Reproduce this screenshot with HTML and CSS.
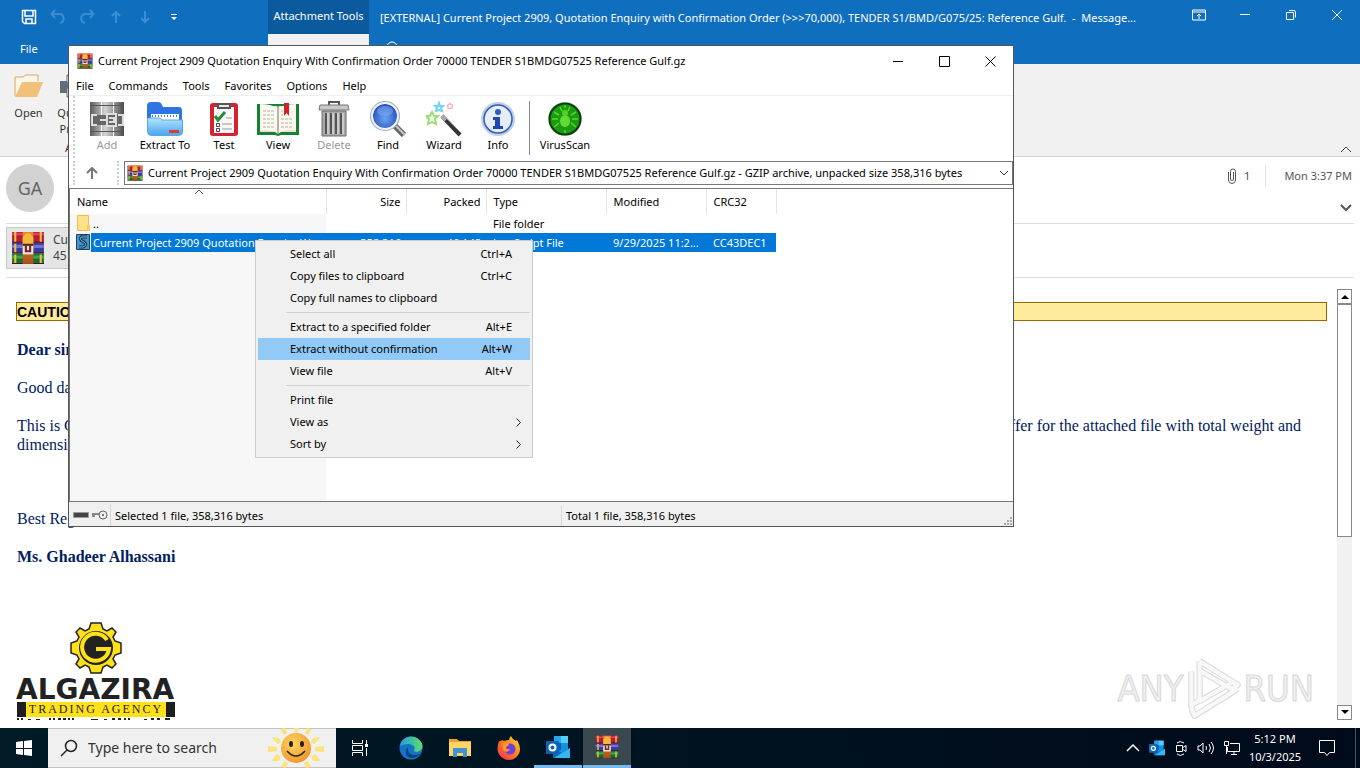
FILE: index.html
```html
<!DOCTYPE html>
<html lang="en">
<head>
<meta charset="utf-8">
<title>Desktop</title>
<link rel="stylesheet" href="styles.css">
</head>
<body>
<svg class="defs" aria-hidden="true">
  <defs>
    <linearGradient id="gold" x1="0" y1="0" x2="0" y2="1"><stop offset="0" stop-color="#e8902a"/><stop offset="1" stop-color="#a8501a"/></linearGradient>
    <linearGradient id="steel" x1="0" x2="1"><stop offset="0" stop-color="#5c5c5c"/><stop offset=".45" stop-color="#d4d4d4"/><stop offset="1" stop-color="#4c4c4c"/></linearGradient>
    <linearGradient id="folderFront" x1="0" y1="0" x2="0" y2="1"><stop offset="0" stop-color="#b5e4ff"/><stop offset="1" stop-color="#4aa6ef"/></linearGradient>
    <radialGradient id="lens" cx=".5" cy=".6" r=".6"><stop offset="0" stop-color="#6ea2f2"/><stop offset="1" stop-color="#1746b4"/></radialGradient>
    <linearGradient id="edgeA" x1="0" y1="0" x2="1" y2="0"><stop offset="0" stop-color="#1f9fe0"/><stop offset="1" stop-color="#5fdc6a"/></linearGradient>
    <radialGradient id="sunFace" cx=".4" cy=".35" r=".7"><stop offset="0" stop-color="#ffd560"/><stop offset="1" stop-color="#f0932a"/></radialGradient>
    <linearGradient id="fox" x1="1" y1="0" x2="0" y2="1"><stop offset="0" stop-color="#ffe030"/><stop offset=".5" stop-color="#ff7a20"/><stop offset="1" stop-color="#f0285c"/></linearGradient>
  </defs>
  <symbol id="winrar" viewBox="0 0 32 32">
    <path fill="#b81c34" d="M1 1h30v10H1z"/><path fill="#e0455a" d="M1 2h30v2H1z"/>
    <path fill="#3c3c9c" d="M1 11h30v10H1z"/><path fill="#7272dc" d="M1 13h30v3H1z"/>
    <path fill="#16702c" d="M1 21h30v10H1z"/><path fill="#3aa452" d="M1 23h30v3H1z"/>
    <path fill="#48102c" d="M1 10h30v1H1zM1 20h30v1H1zM1 30h30v1H1z"/>
    <path fill="#f0bc3c" d="M3 1h2v9H3zM3 12h2v8H3zM3 22h2v8H3zM27 1h2v9h-2zM27 22h2v8h-2z"/>
    <path fill="url(#gold)" d="M11 1h10v30H11z"/>
    <path fill="#f4b840" d="M11 6q5-8 10 0v8H11z"/><path fill="#4a2a12" d="M11 12h10v3H11z"/>
    <path fill="#e8e4e4" d="M11 14h10v8H11z"/><path fill="#802020" d="M13 14h2v4h2v-4h2v6h-6z"/>
  </symbol>
  <symbol id="outlook" viewBox="0 0 24 24">
    <path fill="#1490df" d="M8 1h14v20H8z"/><path fill="#28a8ea" d="M8 1h7v7H8z"/><path fill="#50d0f8" d="M15 1h7v7h-7z"/>
    <path fill="#0f5ca8" d="M8 8h7v7H8z"/><path fill="#1066b5" d="m7 13 9 5 8-5v10H7z"/><path fill="#35b8f1" d="m8 23 16-10v10z"/>
    <rect x="0" y="6" width="13" height="13" rx="1" fill="#0a64b8"/><circle cx="6.500" cy="12.500" r="3" fill="none" stroke="#fff" stroke-width="2"/>
  </symbol>
</svg>

<div class="desktop">
  <section class="outlook" aria-label="Message">
    <header class="o-top">
      <div class="o-left">
        <div class="quick">
          <button aria-label="Save"><svg width="16" height="16" viewBox="0 0 16 16"><path d="M1.500 1.500h13v13h-11l-2-2zM4 2v5h8V2M5 14v-4h6v4" fill="none" stroke="#fff" stroke-width="1.500"/></svg></button>
          <button aria-label="Undo" class="dim"><svg width="16" height="16" viewBox="0 0 16 16"><path d="M5 1 1.500 5 5 9M2 5h7c6 0 6 8 1 9" /></svg></button>
          <button aria-label="Redo" class="dim"><svg width="16" height="16" viewBox="0 0 16 16"><path d="m11 1 3.500 4L11 9M14 5H7C1 5 1 13 6 14"/></svg></button>
          <button aria-label="Previous" class="dim"><svg width="16" height="16" viewBox="0 0 16 16"><path d="M8 14V3M4 7l4-4 4 4"/></svg></button>
          <button aria-label="Next" class="dim"><svg width="16" height="16" viewBox="0 0 16 16"><path d="M8 2v11M4 9l4 4 4-4"/></svg></button>
          <button aria-label="Customize"><svg width="8" height="8" viewBox="0 0 8 8"><path fill="#fff" d="M1 1h6v1H1zM1 4h6L4 7z"/></svg></button>
        </div>
        <nav class="tabs"><a href="#">File</a><a href="#">Message</a><a href="#">Developer</a><a href="#">Help</a></nav>
      </div>
      <div class="tool-tab"><span>Attachment Tools</span><a href="#">Attachments</a></div>
      <div class="o-right">
        <div class="o-title">
          <h1>[EXTERNAL] Current Project 2909, Quotation Enquiry with Confirmation Order (&gt;&gt;&gt;70,000), TENDER S1/BMD/G075/25: Reference Gulf.&nbsp; -&nbsp; Message...</h1>
          <div class="caption">
            <button aria-label="Ribbon options"><svg width="14" height="12" viewBox="0 0 14 12"><path d="M.5 1h13v10H.5zM0 3h14M7 10V5M5 7l2-2 2 2" fill="none" stroke="#fff"/></svg></button>
            <button aria-label="Minimize"><svg width="10" height="12" viewBox="0 0 10 12"><path d="M0 5.500h10" stroke="#fff"/></svg></button>
            <button aria-label="Restore"><svg width="12" height="12" viewBox="0 0 12 12"><path d="M1.500 3.500h7v7h-7zM4 1.500h5a1.500 1.500 0 0 1 1.500 1.500v5.500" fill="none" stroke="#fff"/></svg></button>
            <button aria-label="Close"><svg width="12" height="12" viewBox="0 0 12 12"><path d="m1 1 10 10M11 1 1 11" stroke="#fff"/></svg></button>
          </div>
        </div>
        <div class="tell"><svg width="14" height="16" viewBox="0 0 14 16"><path d="M5 12c0-3-3-3-3-6a5 5 0 0 1 10 0c0 3-3 3-3 6zM5 14h4" fill="none" stroke="#fff"/></svg><span>Tell me what you want to do</span></div>
      </div>
    </header>

    <div class="ribbon">
      <button class="r-btn"><svg width="30" height="24" viewBox="0 0 30 24"><path fill="#fbf6ec" stroke="#d9a75c" d="M1 22V3h8l3-2h12v6"/><path fill="#f2c078" d="M8 8h21l-6 15H1z"/></svg><span>Open</span></button>
      <button class="r-btn"><svg width="26" height="24" viewBox="0 0 26 24"><path fill="#666c76" d="M1 7h24v12H1z"/><path fill="#fff" stroke="#666" d="M8 1h13v8H8zM8 14h13v9H8z"/><path fill="#2b7fd0" d="M4 9h3v2H4z"/></svg><span>Quick<br>Print</span></button>
      <span class="r-group">Actions</span>
      <svg class="r-fold" width="12" height="7" viewBox="0 0 12 7"><path d="m1 6 5-5 5 5" fill="none" stroke="#444"/></svg>
    </div>

    <div class="m-head">
      <span class="avatar">GA</span>
      <div class="m-meta">
        <div class="m-date">
          <svg width="10" height="16" viewBox="0 0 10 16"><path d="M6.500 4v7a1.500 1.500 0 0 1-3 0V3.500a2.500 2.500 0 0 1 5 0V12a3.500 3.500 0 0 1-7 0V4" fill="none" stroke="#555"/></svg>
          <span class="count">1</span><time>Mon 3:37 PM</time>
        </div>
        <svg width="12" height="8" viewBox="0 0 12 8"><path d="m1 1 5 5 5-5" fill="none" stroke="#555" stroke-width="2"/></svg>
      </div>
    </div>
    <div class="m-attach">
      <button class="file"><svg width="34" height="34"><use href="#winrar"/></svg><span>Current Project<br>45 KB</span></button>
    </div>

    <div class="m-body">
      <article class="mail">
        <p class="caution">CAUTION:</p>
        <p><b>Dear sir,</b></p>
        <p>Good day,</p>
        <p class="ends"><span>This is Ghadeer<br>dimensions.</span><span>offer for the attached file with total weight and</span></p>
        <p class="regards">Best Regards,</p>
        <p><b>Ms. Ghadeer Alhassani</b></p>
        <div class="logo">
          <svg class="gear" width="52" height="52" viewBox="-26 -26 52 52">
            <path fill="#ffe11a" stroke="#222" stroke-width="1.500" d="M-5-25H5L7-19 11-17 16-20 20-16 17-11 19-7 25-5V5L19 7 17 11 20 16 16 20 11 17 7 19 5 25H-5L-7 19-11 17-16 20-20 16-17 11-19 7-25 5V-5L-19-7-17-11-20-16-16-20-11-17-7-19z"/>
            <circle r="17" fill="#222"/>
            <path fill="none" stroke="#ffe11a" stroke-width="4" d="M11-8A13.500 13.500 0 1 0 13 1H0"/>
          </svg>
          <strong>ALGAZIRA</strong>
          <div class="tagline"><span>TRADING AGENCY</span></div>
          <svg width="158" height="3" viewBox="0 0 158 3"><path d="M1 1h2m2 0h2m5 1h3m5 0h4m9-1h2m2 0h2m3 0h3m2 0h3m2 0h2m2 0h2m17 1h7m6 0h3m5-1h3m3 0h3m3 0h2m2 0h2m14 1h3m4-1h3m3 0h3m5 0h5" stroke="#222" stroke-width="2"/></svg>
        </div>
      </article>
      <div class="scroll">
        <button aria-label="Scroll up"><svg width="8" height="5" viewBox="0 0 8 5"><path d="M0 5h8L4 1z"/></svg></button>
        <div class="thumb"></div>
        <button class="down" aria-label="Scroll down"><svg width="8" height="5" viewBox="0 0 8 5"><path d="M0 0h8L4 4z"/></svg></button>
      </div>
    </div>
  </section>

  <div class="mark" aria-label="ANY RUN"><span>ANY</span>
    <svg width="58" height="66" viewBox="0 0 56 64"><path d="M14 5v38l-8 5V15M14 5l37 23-6 4-31-18M14 44l10-6 21-12M6 50l3 8 42-26" fill="none" stroke="#dadada" stroke-width="6" stroke-linejoin="round"/><path d="M14 5v38l-8 5V15M14 5l37 23-6 4-31-18M14 44l10-6 21-12M6 50l3 8 42-26" fill="none" stroke="#f8f8f8" stroke-width="4" stroke-linejoin="round"/></svg>
    <span>RUN</span></div>

  <section class="win" aria-label="WinRAR">
    <header class="w-title">
      <svg width="16" height="16"><use href="#winrar"/></svg>
      <h2>Current Project 2909 Quotation Enquiry With Confirmation Order 70000 TENDER S1BMDG07525 Reference Gulf.gz</h2>
      <div class="w-caption">
        <button aria-label="Minimize"><svg width="10" height="10" viewBox="0 0 10 10"><path d="M0 5.500h10" stroke="#000"/></svg></button>
        <button aria-label="Maximize"><svg width="11" height="11" viewBox="0 0 11 11"><path d="M.5.5h10v10H.5z" fill="none" stroke="#000"/></svg></button>
        <button aria-label="Close"><svg width="11" height="11" viewBox="0 0 11 11"><path d="m.5.5 10 10M10.500.5l-10 10" stroke="#000"/></svg></button>
      </div>
    </header>
    <nav class="w-menu"><button>File</button><button>Commands</button><button>Tools</button><button>Favorites</button><button>Options</button><button>Help</button></nav>
    <div class="w-tools">
      <button class="c54" disabled><svg width="36" height="36" viewBox="0 0 36 36"><path fill="url(#steel)" d="M1 1h11v34H1zM13 1h11v34H13zM25 1h10v34H25z"/><path fill="#555" d="M1 4h34v1H1zM1 30h34v1H1z"/><path fill="#666" d="M1 14h34v10H1z"/><path fill="none" stroke="#ddd" stroke-width="2" d="M8 14H3v10h5M11 19h7M18 13h9v12h-9zM20 17h5v4h-5M29 14h5v10h-5"/></svg><span>Add</span></button>
      <button class="c62"><svg width="36" height="36" viewBox="0 0 36 36"><path fill="#2f74e4" d="M0 5q0-4 4-4h7q3 0 4 3l1 2h16q3 0 3 4v20H0z"/><path fill="#fff" d="M4 13h28v10H4z"/><path fill="none" stroke="#4688d0" stroke-width="2" stroke-dasharray="1 2" d="M5 15h26"/><path fill="url(#folderFront)" stroke="#57a8ea" d="M.5 17H12q2 0 3 2h20.500v12q0 3.500-4 3.500H4.500q-4 0-4-4z"/><path fill="#e23b2e" d="M22 29h10v3H22z"/></svg><span>Extract To</span></button>
      <button class="c56"><svg width="36" height="36" viewBox="0 0 36 36"><rect x="4" y="2" width="28" height="33" rx="3" fill="#d2232f"/><path fill="#f8f8f8" d="M8 6h20v26H8z"/><path fill="#555" d="M11 2h14v6H11z"/><path fill="#e8e8e8" d="M13 4h10v2H13z"/><path fill="none" stroke="#258b36" stroke-width="3" d="m9 15 3 4 7-8"/><path d="M20 17h6M16 23h10M16 28h10" stroke="#999"/><path fill="none" stroke="#444" d="M10.500 22.500h3v3h-3zM10.500 27.500h3v3h-3z"/></svg><span>Test</span></button>
      <button class="c52"><svg width="42" height="36" viewBox="0 0 42 36"><path fill="#168134" d="M0 3h42v31H24l-3 1-3-1H0z"/><path fill="#e5e2d2" d="M3 5h17l1 1 1-1h17v26H24l-3 2-3-2H3z"/><path fill="#faf8ee" d="M3 3q11 0 17 4v24q-6-2-17-2zM39 3q-11 0-17 4v24q6-2 17-2z"/><path stroke="#888" d="M21 6v27"/><path stroke="#b4b4aa" stroke-dasharray="3 1" d="M6 10h12M6 14h12M6 18h12M6 22h12M6 26h12M24 10h2M24 14h2M24 18h12M24 22h12M24 26h12"/><path fill="#d02424" d="M27 2h5v13l-2.500-3-2.500 3z"/></svg><span>View</span></button>
      <button class="c60" disabled><svg width="36" height="36" viewBox="0 0 36 36"><path fill="none" stroke="#555" stroke-width="2" d="M13 4V1h10v3"/><path fill="#c8c8c8" stroke="#777" d="M4 4h28l1 5H3z"/><path fill="#a8a8a8" stroke="#6c6c6c" d="M6 10h24v25H6z"/><path stroke="#555" stroke-width="2" d="M10 12v21M15 12v21M20 12v21M25 12v21"/><path stroke="#eee" d="M12 12v21M17 12v21M22 12v21M27 12v21"/></svg><span>Delete</span></button>
      <button class="c48"><svg width="36" height="36" viewBox="0 0 36 36"><path stroke="#666" stroke-width="6" d="m25 25 9 9"/><path stroke="#c8c8c8" stroke-width="2" d="m26 25 9 9"/><circle cx="15" cy="15" r="13.500" fill="url(#lens)" stroke="#9ea8b8" stroke-width="3"/><circle cx="15" cy="15" r="13" fill="none" stroke="#eef3fa" stroke-width="2"/><ellipse cx="15" cy="10" rx="8" ry="5" fill="#88b2f4" opacity=".5"/></svg><span>Find</span></button>
      <button class="c64"><svg width="36" height="36" viewBox="0 0 36 36"><path stroke="#333" stroke-width="4" d="M16 15 34 34"/><path stroke="#aaa" stroke-width="4" d="m16 15 4 4"/><path stroke="#888" d="m21 18 14 14"/><g fill="none" stroke-width="2"><path stroke="#96e070" d="m6 11 2 4 4 0-3 3 1 5-4-2-4 2 1-5-3-3 4 0z"/><path stroke="#74d4f0" d="m13 2 1 3 3 0-2 2 1 3-3-1-3 1 1-3-2-2 3 0z"/><path stroke="#f0a0a0" stroke-width="1" d="m24 2 1 2 2 0-1 2 0 2-2-1-2 1 0-2-1-2 2 0z"/></g></svg><span>Wizard</span></button>
      <button class="c44"><svg width="36" height="36" viewBox="0 0 36 36"><circle cx="18" cy="18" r="17" fill="#c0cfe6"/><circle cx="18" cy="18" r="14" fill="#e6edf8" stroke="#2e5cb8" stroke-width="1.500"/><circle cx="18" cy="11" r="3" fill="#2a5ac8"/><path fill="#2048b4" d="M13 16h7v9h3v3H13v-3h2v-6h-2z"/></svg><span>Info</span></button>
      <i class="w-sep"></i>
      <button class="c66"><svg width="36" height="36" viewBox="0 0 36 36"><circle cx="18" cy="18" r="17" fill="#c4ccc4"/><circle cx="18" cy="18" r="15.500" fill="#1c9a12" stroke="#0b3e0c" stroke-width="2"/><g stroke="#52dc28" stroke-width="1.500" fill="none"><path d="M12 14 7 11M11 18H5M12 22l-5 4M24 14l5-3M25 18h6M24 22l5 4M15 10l-2-4M21 10l2-4M18 4v3M18 29v3"/></g><ellipse cx="18" cy="20" rx="5" ry="6" fill="#62dc34"/><circle cx="18" cy="12" r="3" fill="#58d02c"/></svg><span>VirusScan</span></button>
    </div>
    <div class="w-addr">
      <button class="up" aria-label="Up one level"><svg width="12" height="12" viewBox="0 0 12 12"><path d="M6 12V1M1 6l5-5 5 5" fill="none" stroke="#777" stroke-width="2"/></svg></button>
      <div class="combo"><svg width="16" height="16"><use href="#winrar"/></svg><span>Current Project 2909 Quotation Enquiry With Confirmation Order 70000 TENDER S1BMDG07525 Reference Gulf.gz - GZIP archive, unpacked size 358,316 bytes</span><svg width="10" height="6" viewBox="0 0 10 6"><path d="m1 1 4 4 4-4" fill="none" stroke="#333"/></svg></div>
    </div>
    <div class="w-list">
      <table>
        <colgroup><col class="k256"><col class="k80"><col class="k80"><col class="k120"><col class="k100"><col class="k70"></colgroup>
        <thead><tr><th class="sorted">Name<svg width="8" height="5" viewBox="0 0 8 5"><path d="m0 4 4-4 4 4" fill="none" stroke="#555"/></svg></th><th class="num">Size</th><th class="num">Packed</th><th>Type</th><th>Modified</th><th>CRC32</th></tr></thead>
        <tbody>
          <tr><td><div class="name"><svg width="16" height="17" viewBox="0 0 16 17"><path fill="#ffe18a" stroke="#e8bf55" d="M2.500.5h11v15h-11z"/><path fill="#f5cc60" d="M12 10h3v6h-3z"/></svg><span>..</span></div></td><td></td><td></td><td>File folder</td><td></td><td></td></tr>
          <tr class="sel"><td><div class="name"><svg width="16" height="17" viewBox="0 0 16 17"><path fill="#4795c8" stroke="#184468" d="M1.500.5h13v15h-13z"/><path fill="none" stroke="#0c2e50" stroke-width="3" d="M12 3H6q-2 3 3 5 4 3-1 5H4"/><path fill="none" stroke="#78c8e8" d="M12 3H6q-2 3 3 5 4 3-1 5H4"/></svg><span>Current Project 2909 Quotation Enquiry W...</span></div></td><td class="num">358,316</td><td class="num">46,148</td><td>JavaScript File</td><td>9/29/2025 11:2...</td><td>CC43DEC1</td></tr>
        </tbody>
      </table>
    </div>
    <footer class="w-status">
      <div class="drives"><svg width="16" height="8" viewBox="0 0 16 8"><path fill="#444" stroke="#999" d="M.5 1.500h15v5H.5z"/></svg><svg width="16" height="10" viewBox="0 0 16 10"><path d="M0 3h7v2H3v2H0z" fill="#888"/><circle cx="11" cy="5" r="4" fill="#eee" stroke="#666"/><circle cx="11" cy="5" r="1" fill="#555"/></svg></div>
      <span class="s-sel">Selected 1 file, 358,316 bytes</span>
      <span class="s-tot">Total 1 file, 358,316 bytes</span>
      <svg class="grip" width="9" height="9" viewBox="0 0 9 9"><path fill="#aaa" d="M6 0h2v2H6zM3 3h2v2H3zM6 3h2v2H6zM0 6h2v2H0zM3 6h2v2H3zM6 6h2v2H6z"/></svg>
    </footer>
  </section>

  <div class="ctx" role="menu">
    <button role="menuitem">Select all<kbd>Ctrl+A</kbd></button>
    <button role="menuitem">Copy files to clipboard<kbd>Ctrl+C</kbd></button>
    <button role="menuitem">Copy full names to clipboard</button>
    <hr>
    <button role="menuitem">Extract to a specified folder<kbd>Alt+E</kbd></button>
    <button role="menuitem" class="hot">Extract without confirmation<kbd>Alt+W</kbd></button>
    <button role="menuitem">View file<kbd>Alt+V</kbd></button>
    <hr>
    <button role="menuitem">Print file</button>
    <button role="menuitem" class="sub">View as<svg width="5" height="9" viewBox="0 0 5 9"><path d="m.5.5 4 4-4 4" fill="none" stroke="#222"/></svg></button>
    <button role="menuitem" class="sub">Sort by<svg width="5" height="9" viewBox="0 0 5 9"><path d="m.5.5 4 4-4 4" fill="none" stroke="#222"/></svg></button>
  </div>

  <footer class="taskbar">
    <button class="start" aria-label="Start"><svg width="16" height="16" viewBox="0 0 16 16"><path fill="#fff" d="m0 2 7-1v7H0zM8 1l8-1v8H8zM0 9h7v6l-7-1zM8 9h8v7l-8-1z"/></svg></button>
    <div class="search">
      <svg width="18" height="18" viewBox="0 0 18 18"><circle cx="11" cy="7" r="5.500" fill="none" stroke="#222" stroke-width="1.500"/><path d="m7 11-6 6" stroke="#222" stroke-width="1.500"/></svg>
      <input type="text" placeholder="Type here to search" aria-label="Type here to search">
      <svg width="56" height="40" viewBox="0 0 56 40"><path fill="#fbe27a" d="M26 0h5l-1 4h-3zM12 1l5-1 2 5-3 2zM44 1l-5-1-2 5 3 2zM3 9l8 1 2 4-3 2zM53 9l-8 1-2 4 3 2zM0 18l9 1v4l-9 1zM56 18l-9 1v4l9 1zM3 33l6-7 4 2-2 5zM53 33l-6-7-4 2 2 5zM13 39l3-6 4 2-2 5zM43 39l-3-6-4 2 2 5z"/><circle cx="28" cy="20" r="15" fill="url(#sunFace)"/><ellipse cx="23" cy="16" rx="2" ry="3" fill="#222"/><ellipse cx="34" cy="16" rx="2" ry="3" fill="#222"/><path d="M19 23q9 10 18 0" fill="none" stroke="#222" stroke-width="1.500"/></svg>
    </div>
    <button class="app view" aria-label="Task view"><svg width="18" height="16" viewBox="0 0 18 16"><path d="M1.500 0v3.500h10V0M1.500 5.500h10v5h-10zM1.500 16v-3.500h10V16M15.500 0v4M15.500 8v8" fill="none" stroke="#fff"/><path fill="#fff" d="M14 4h3v3h-3z"/></svg></button>
    <button class="app" aria-label="Edge"><svg width="24" height="24" viewBox="0 0 24 24"><circle cx="12" cy="12" r="11.500" fill="#1373c8"/><path fill="url(#edgeA)" d="M1 10C2 4 7 .5 12 .5 19 .5 24 6 23.500 11c-.5 4-6 6-9 4 3-3 0-7-5-7-4 0-7 1-8.500 2z"/><path fill="#0b3f78" d="M9 12c-1 5 4 9 12 6-3 5-15 6-14-3 0-2 1-3 2-3z"/></svg></button>
    <button class="app" aria-label="File Explorer"><svg width="24" height="24" viewBox="0 0 24 24"><path fill="#f2a02c" d="M1 3h8l2 2h12v6H1z"/><path fill="#ffd666" d="M1 6h22v14H1z"/><path fill="#3f93d2" d="M5 12h14v9h-4v-4H9v4H5z"/></svg></button>
    <button class="app" aria-label="Firefox"><svg width="24" height="24" viewBox="0 0 24 24"><path fill="url(#fox)" d="M2 5q1 1 3-1l2 1Q10 4 12 4q0-2 2-4 1 3 5 5l1-1q3 5 3 9c0 6-5 11-11 11S.5 19 .5 13Q.5 9 2 5z"/><circle cx="13" cy="13" r="5.500" fill="#7040dc"/><path fill="#ff9a28" d="M6 7q4-1 6 2l-3 2q0 3 4 2-2 4-6 2-2-3-1-8z"/></svg></button>
    <button class="app open" aria-label="Outlook"><svg width="24" height="24"><use href="#outlook"/></svg></button>
    <button class="app open active" aria-label="WinRAR"><svg width="26" height="24"><use href="#winrar"/></svg></button>
    <div class="tray">
      <svg width="14" height="8" viewBox="0 0 14 8"><path d="m1 7 6-6 6 6" fill="none" stroke="#fff" stroke-width="1.500"/></svg>
      <svg width="16" height="16"><use href="#outlook"/></svg>
      <svg width="14" height="16" viewBox="0 0 14 16"><path d="M2.500 5.500h6v6h-6zM9 7.500l3-2v6l-3-2M3 3q3-3 7 0M3 14q3 3 7 0" fill="none" stroke="#fff"/></svg>
      <svg width="18" height="14" viewBox="0 0 18 14"><path d="M1 5v4h2l3 3V2L3 5zM9 5q1 2 0 4M12 3q3 4 0 8M14 1q5 6 0 12" fill="none" stroke="#fff"/></svg>
      <svg width="16" height="14" viewBox="0 0 16 14"><path d="M6 2.500h9.500v8H3.500V6M7 13.500h6M10 11v2M.5.5h4v4h-4zM2.500 5v8" fill="none" stroke="#fff"/></svg>
    </div>
    <div class="clock"><time>5:12 PM</time><time>10/3/2025</time></div>
    <button class="notes" aria-label="Notifications"><svg width="16" height="16" viewBox="0 0 16 16"><path d="M.5.5h15v12h-5l-2.500 3-2.500-3h-5z" fill="none" stroke="#fff"/></svg></button>
    <i class="peek"></i>
  </footer>
</div>
</body>
</html>
```
FILE: styles.css
```css
* { box-sizing: border-box; }
:root { --ui: "Noto Sans", "Open Sans", sans-serif; }
html, body { height: 100%; margin: 0; }
body { font: 11px/16px var(--ui); color: #000; overflow: hidden; }
button { font: inherit; color: inherit; background: none; border: 0; padding: 0; margin: 0; display: flex; align-items: center; justify-content: center; white-space: nowrap; }
h1, h2, p { margin: 0; font-weight: normal; }
a { color: inherit; text-decoration: none; }
svg { flex: none; display: block; }
.defs { position: absolute; width: 0; height: 0; }

.desktop { position: relative; display: flex; flex-direction: column; height: 100vh; background: #fff; }
.outlook { flex: 1; min-height: 0; display: flex; flex-direction: column; background: #fff; }

/* Outlook title and tabs */
.o-top { display: flex; height: 64px; flex: none; background: #106ebe; color: #fff; }
.o-left { width: 268px; flex: none; display: flex; flex-direction: column; }
.quick { display: flex; height: 34px; padding-left: 14px; }
.quick button { width: 29px; }
.dim { opacity: .35; }
.dim path { fill: none; stroke: #8cc8ff; stroke-width: 2; }
.tabs { display: flex; align-items: center; height: 30px; padding-left: 20px; gap: 31px; }
.tool-tab { width: 101px; flex: none; display: flex; flex-direction: column; text-align: center; white-space: nowrap; }
.tool-tab span { height: 34px; line-height: 32px; background: #0c5a9e; }
.tool-tab a { height: 30px; line-height: 30px; background: #f1f1f1; color: #106ebe; }
.o-right { flex: 1; min-width: 0; display: flex; flex-direction: column; }
.o-title { display: flex; justify-content: space-between; height: 34px; padding-left: 11px; }
.o-title h1 { flex: 1; min-width: 0; overflow: hidden; font-size: 11px; line-height: 36px; white-space: nowrap; }
.caption { display: flex; flex: none; height: 30px; }
.caption button { width: 46px; }
.tell { display: flex; align-items: center; height: 30px; padding-left: 16px; gap: 12px; }

.ribbon { position: relative; display: flex; flex: none; height: 93px; padding: 10px 0 0 4px; background: #f1f1f1; border-bottom: 1px solid #d0d0d0; color: #333; }
.r-btn { width: 49px; flex-direction: column; justify-content: flex-start; gap: 7px; }
.r-btn + .r-btn { width: 38px; }
.r-group { position: absolute; left: 65px; bottom: 0; }
.r-fold { position: absolute; right: 8px; bottom: 3px; }

/* Message header */
.m-head { display: flex; flex: none; justify-content: space-between; height: 67px; margin: 0 6px; border-bottom: 1px solid #dcdcdc; color: #555; }
.avatar { width: 48px; height: 48px; margin-top: 7px; border-radius: 50%; background: #d2d2d2; color: #666; font-size: 18px; line-height: 48px; text-align: center; }
.m-meta { display: flex; flex-direction: column; align-items: flex-end; gap: 16px; padding: 7px 2px 0 0; }
.m-date { display: flex; align-items: center; height: 24px; }
.count { margin-left: 7px; padding-right: 15px; line-height: 22px; border-right: 1px solid #e1e1e1; }
.m-date time { margin-left: 18px; }
.m-attach { display: flex; flex: none; height: 54px; margin: 0 6px; padding-top: 3px; border-bottom: 1px solid #dcdcdc; color: #444; }
.file { height: 42px; width: 200px; padding: 0 4px; gap: 8px; justify-content: flex-start; text-align: left; font-size: 12px; border: 1px solid #c6c6c6; background: #e5e5e5; }

/* Message text */
.m-body { display: flex; flex: 1; min-height: 0; margin: 11px 8px 8px 16px; justify-content: space-between; gap: 10px; }
.mail { flex: 1; min-width: 0; overflow: hidden; padding-top: 13px; display: flex; flex-direction: column; gap: 19px; font: 16px/19px "Liberation Serif", serif; color: #002060; }
.mail p { padding-left: 1px; flex: none; }
.mail .caution { height: 19px; padding-left: 0; border: 1px solid #9c6500; background: #ffeb9c; color: #000; font: bold 14px/18px "Liberation Sans", sans-serif; }
.mail .ends { display: flex; justify-content: space-between; padding-right: 26px; }
.mail .regards { margin-top: 36px; }
.logo { display: flex; flex-direction: column; width: 160px; flex: none; margin-top: 37px; color: #222; }
.gear { align-self: center; }
.logo strong { margin-top: 4px; font: bold 28px/24px "DejaVu Sans", sans-serif; }
.tagline { height: 15px; width: 158px; padding: 0 9px; margin: 0 0 1px 1px; background: #1e1e1e; }
.tagline span { display: block; background: #ffe11a; text-align: center; font: 12px/15px "Liberation Serif", serif; letter-spacing: 2px; white-space: nowrap; }
.scroll { display: flex; flex-direction: column; width: 15px; background: #f1f1f1; }
.scroll button, .thumb { border: 1px solid #888; background: #fff; }
.scroll button { height: 15px; flex: none; }
.thumb { height: 54%; }
.scroll .down { margin-top: auto; }

.mark { position: absolute; right: 46px; bottom: 48px; display: flex; align-items: center; height: 62px; gap: 1px; font: 36px/40px "Liberation Sans Narrow", "DejaVu Sans Condensed", sans-serif; color: #f0f0f0; -webkit-text-stroke: 1px #d8d8d8; }

/* Archive window */
.win { position: absolute; left: 68px; top: 45px; width: 946px; height: 482px; display: flex; flex-direction: column; border: 1px solid #555; background: #fff; }
.w-title { display: flex; align-items: center; flex: none; height: 30px; padding-left: 8px; gap: 5px; }
.w-title h2 { flex: 1; font-size: 11px; white-space: nowrap; }
.w-caption { display: flex; height: 28px; }
.w-caption button { width: 46px; }
.w-menu { display: flex; flex: none; height: 20px; padding-left: 7px; gap: 15px; border-bottom: 1px solid #eee; }
.w-tools { display: flex; flex: none; height: 62px; margin-left: 4px; padding: 5px 0 0 5px; border-left: 2px dotted #ccc; }
.w-tools button { flex-direction: column; justify-content: flex-start; }
.w-tools button:disabled { color: #999; }
.c44 { width: 44px; } .c48 { width: 48px; } .c52 { width: 52px; } .c54 { width: 54px; } .c56 { width: 56px; }
.c60 { width: 60px; } .c62 { width: 62px; } .c64 { width: 64px; } .c66 { width: 66px; }
.w-sep { height: 54px; margin: 0 2px 0 9px; border-left: 1px solid #888; }
.w-addr { display: flex; flex: none; height: 30px; margin-left: 4px; padding: 3px 0; }
.up { flex: none; width: 46px; border-left: 2px dotted #ccc; border-right: 2px dotted #ccc; padding-right: 9px; }
.combo { flex: 1; min-width: 0; display: flex; align-items: center; margin-left: 5px; padding: 0 3px 0 2px; gap: 5px; border: 1px solid #777; }
.combo span { flex: 1; min-width: 0; white-space: nowrap; }
.w-list { flex: 1; min-height: 0; border: 1px solid #777; border-width: 1px 0 1px 1px; background: linear-gradient(#f7f7f7, #f7f7f7) 0 0 / 256px 100% no-repeat; }
table { width: 706px; table-layout: fixed; border-collapse: collapse; }
.k256 { width: 256px; } .k80 { width: 80px; } .k120 { width: 120px; } .k100 { width: 100px; } .k70 { width: 70px; }
th { position: relative; height: 25px; padding: 0 7px; font-weight: normal; text-align: left; border-right: 1px solid #e5e5e5; background: #fff; }
th svg { position: absolute; left: 49%; top: 1px; }
td { height: 19px; padding: 0 7px; white-space: nowrap; line-height: 18px; }
td:first-child { padding: 0 0 0 5px; }
.num { text-align: right; padding-right: 5px; }
.name { display: flex; align-items: center; }
.name span { flex: 1; padding-left: 2px; line-height: 19px; }
.sel { color: #fff; }
.sel td:not(:first-child), .sel .name span { background: #0078d7; }
.w-status { display: flex; align-items: flex-end; flex: none; height: 24px; background: #f0f0f0; }
.drives { display: flex; align-items: center; width: 42px; padding-left: 4px; gap: 3px; height: 22px; border-right: 1px solid #d7d7d7; }
.s-sel { width: 451px; padding-left: 4px; line-height: 20px; border-right: 1px solid #d7d7d7; }
.s-tot { flex: 1; padding-left: 4px; line-height: 20px; }

.ctx { position: absolute; left: 255px; top: 240px; width: 278px; padding: 2px; border: 1px solid #ccc; background: #f0f0f0; }
.ctx button { width: 100%; height: 22px; padding: 0 18px 0 32px; justify-content: space-between; }
.ctx .sub { padding-right: 9px; }
.ctx .hot { background: #91c9f7; }
.ctx kbd { font: inherit; }
.ctx hr { height: 1px; margin: 3px 0 3px 28px; border: 0; background: #d2d2d2; }

/* Taskbar */
.taskbar { display: flex; flex: none; height: 40px; background: linear-gradient(90deg, #001b26, #000a1a); color: #fff; }
.start { width: 48px; }
.search { display: flex; align-items: center; width: 288px; padding: 0 12px; gap: 10px; background: #f0f0f0; border: 1px solid #c4c4c4; border-width: 1px 0; }
.search input { flex: 1; min-width: 0; padding: 0; border: 0; background: none; font: 14px/20px var(--ui); }
.search input::placeholder { color: #333; opacity: 1; }
.app { width: 48px; margin-right: 1px; }
.view { width: 50px; padding-right: 2px; }
.open { border-bottom: 3px solid #76b9ed; }
.active { background: #3a4850; }
.tray { display: flex; align-items: center; gap: 9px; margin-left: auto; }
.clock { display: flex; flex-direction: column; justify-content: center; width: 70px; line-height: 18px; text-align: center; }
.notes { width: 34px; }
.peek { width: 5px; margin-left: 11px; border-left: 1px solid #456; }
```
